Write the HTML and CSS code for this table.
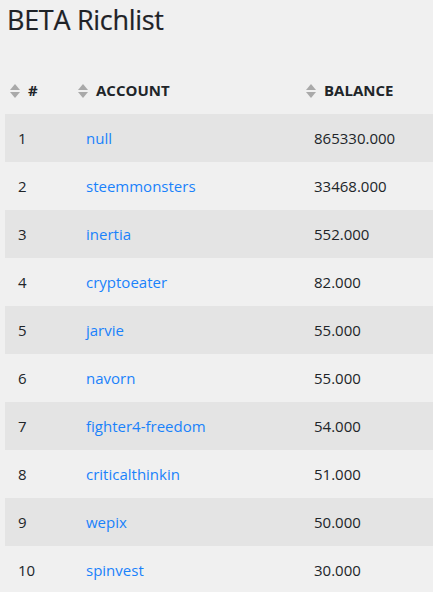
FILE: index.html
```html
<!DOCTYPE html>
<html lang="en">
<head>
    <meta charset="UTF-8">
    <meta name="viewport" content="width=device-width, initial-scale=1.0">
    <title>BETA Richlist</title>
    <link rel="stylesheet" href="styles.css">
</head>
<body>
    <div class="page">
        <h1>BETA Richlist</h1>

        <table class="richlist">
            <thead>
                <tr>
                    <th class="col-rank"><span class="sort"></span>#</th>
                    <th class="col-account"><span class="sort"></span>ACCOUNT</th>
                    <th class="col-balance"><span class="sort"></span>BALANCE</th>
                </tr>
            </thead>
            <tbody>
                <tr><td>1</td><td><a href="#">null</a></td><td>865330.000</td></tr>
                <tr><td>2</td><td><a href="#">steemmonsters</a></td><td>33468.000</td></tr>
                <tr><td>3</td><td><a href="#">inertia</a></td><td>552.000</td></tr>
                <tr><td>4</td><td><a href="#">cryptoeater</a></td><td>82.000</td></tr>
                <tr><td>5</td><td><a href="#">jarvie</a></td><td>55.000</td></tr>
                <tr><td>6</td><td><a href="#">navorn</a></td><td>55.000</td></tr>
                <tr><td>7</td><td><a href="#">fighter4-freedom</a></td><td>54.000</td></tr>
                <tr><td>8</td><td><a href="#">criticalthinkin</a></td><td>51.000</td></tr>
                <tr><td>9</td><td><a href="#">wepix</a></td><td>50.000</td></tr>
                <tr><td>10</td><td><a href="#">spinvest</a></td><td>30.000</td></tr>
            </tbody>
        </table>
    </div>
</body>
</html>
```

FILE: styles.css
```css
body {
    margin: 0;
    font-family: "Open Sans", "Noto Sans", sans-serif;
    font-size: 15px;
    color: #212529;
    background-color: #f0f0f0;
    overflow: hidden;
}

.page {
    padding-left: 5px;
}

h1 {
    margin: 0 0 0 2px;
    padding-top: 2px;
    font-size: 27px;
    font-weight: 400;
    line-height: 36px;
    color: #1e2226;
    letter-spacing: -0.3px;
    -webkit-text-stroke: 0.2px #1e2226;
}

.richlist {
    margin-top: 28px;
    width: 100%;
    border-collapse: collapse;
    table-layout: fixed;
}

/* widths below are content widths; padding adds 18px */
.col-rank {
    width: 50px;
}

.col-account {
    width: 210px;
}

th {
    text-align: left;
    font-size: 15px;
    font-weight: 700;
    line-height: 24px;
    padding: 12px 13px 12px 5px;
    white-space: nowrap;
}

td {
    padding: 12px 13px;
    line-height: 24px;
    white-space: nowrap;
}

tbody tr:nth-child(odd) {
    background-color: #e4e4e4;
}

a {
    color: #1a82fb;
    text-decoration: none;
}

.sort {
    display: inline-block;
    position: relative;
    width: 11px;
    height: 16px;
    margin-right: 7px;
    vertical-align: -3px;
}

.sort::before,
.sort::after {
    content: "";
    position: absolute;
    left: 0;
    border-left: 5.5px solid transparent;
    border-right: 5.5px solid transparent;
}

.sort::before {
    top: 1px;
    border-bottom: 6px solid #a9a9a9;
}

.sort::after {
    top: 9px;
    border-top: 6px solid #a9a9a9;
}
```
